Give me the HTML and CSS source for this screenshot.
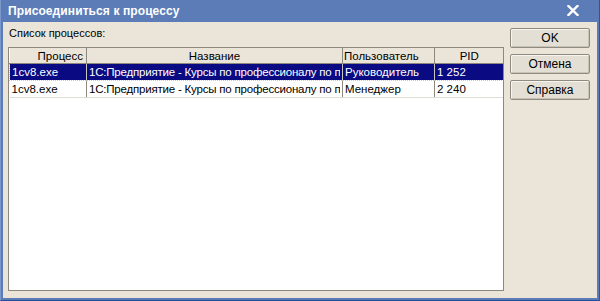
FILE: index.html
```html
<!DOCTYPE html>
<html>
<head>
<meta charset="utf-8">
<link rel="stylesheet" href="styles.css">
</head>
<body>
<div class="window">
  <div class="titlebar">
    <span class="title">Присоединиться к процессу</span>
    <svg class="close" width="12" height="11" viewBox="0 0 12 11"><path d="M1.5 1 L10.5 10 M10.5 1 L1.5 10" stroke="#fff" stroke-width="2.4" stroke-linecap="square"/></svg>
  </div>
  <div class="client">
    <div class="main">
      <div class="label">Список процессов:</div>
      <div class="list">
        <table class="grid">
          <colgroup><col class="c1"><col class="c2"><col class="c3"><col class="c4"></colgroup>
          <thead>
            <tr><th class="right">Процесс</th><th class="center">Название</th><th class="left">Пользователь</th><th class="center">PID</th></tr>
          </thead>
          <tbody>
            <tr class="sel"><td>1cv8.exe</td><td><div class="clip">1С:Предприятие - Курсы по профессионалу по платформе</div></td><td>Руководитель</td><td>1 252</td></tr>
            <tr class="plain"><td>1cv8.exe</td><td><div class="clip">1С:Предприятие - Курсы по профессионалу по платформе</div></td><td>Менеджер</td><td>2 240</td></tr>
          </tbody>
        </table>
      </div>
    </div>
    <div class="buttons">
      <button class="btn">OK</button>
      <button class="btn">Отмена</button>
      <button class="btn">Справка</button>
    </div>
  </div>
</div>
</body>
</html>
```
FILE: styles.css
```css
html, body { margin: 0; padding: 0; }
body { width: 600px; height: 301px; overflow: hidden; font-family: "Liberation Sans", Arial, sans-serif; }
.window {
  width: 600px; height: 301px; box-sizing: border-box;
  background: #5b7cb7;
  display: flex; flex-direction: column;
  border-left: 1px solid #7b98cc; border-right: 1px solid #2e549c; border-bottom: 1px solid #234f9a;
}
.titlebar {
  height: 22px; flex: none; display: flex; align-items: center; justify-content: space-between;
  padding: 0 20px 0 7px;
}
.title { color: #fff; font-weight: bold; font-size: 12px; letter-spacing: 0.1px; }
.close { display: block; margin-top: -1px; }
.client {
  flex: 1; margin: 0 2px 2px 2px; background: #ebe5d9;
  display: flex; align-items: stretch;
}
.main { width: 496px; margin-left: 5px; display: flex; flex-direction: column; }
.label { font-size: 11px; color: #000; padding: 5px 0 0 1px; height: 21px; box-sizing: border-box; }
.list { margin-top: 4px; flex: 1; background: #fff; border: 1px solid #8c887c; margin-bottom: 7px; overflow: hidden; }
.grid { border-collapse: collapse; table-layout: fixed; width: 494px; font-size: 11.5px; }
.c1 { width: 77px; } .c2 { width: 256px; } .c3 { width: 92px; } .c4 { width: 69px; }
th { background: #ebe5d9; font-weight: normal; height: 15px; padding: 0 3px; border-right: 1px solid #8c887c; border-bottom: 1px solid #8c887c; white-space: nowrap; overflow: hidden; line-height: 14px; }
th:last-child { border-right: none; }
.right { text-align: right; } .center { text-align: center; } .left { text-align: left; padding-left: 1px; }
td { height: 16px; padding: 0 2px; white-space: nowrap; overflow: hidden; line-height: 15px; border-right: 1px solid #8c887c; border-bottom: 1px solid #e0ddd4; }
td:last-child { border-right: none; }
.clip { overflow: hidden; white-space: nowrap; letter-spacing: -0.2px; }
.sel td { background: #0a0a82; color: #fff; border-top: 1px dotted #e8d44a; border-bottom: 1px dotted #e8d44a; border-right-color: #c9c6bf; }
.sel td:first-child { border-left: 1px dotted #e8d44a; }
.sel td:last-child { border-right: 1px dotted #e8d44a; }
.plain td { background: #fff; color: #000; }
.buttons { display: flex; flex-direction: column; gap: 6px; margin-left: 6px; padding-top: 6px; }
.btn {
  width: 80px; height: 20px; box-sizing: border-box; padding: 0;
  background: #e4dfd4; border: 1px solid #8f8b80; border-radius: 2px;
  box-shadow: inset 1px 1px 0 #f7f4ee, inset -1px -1px 0 #c9c3b6;
  font-family: "Liberation Sans", Arial, sans-serif; font-size: 12px; color: #000;
}
```
